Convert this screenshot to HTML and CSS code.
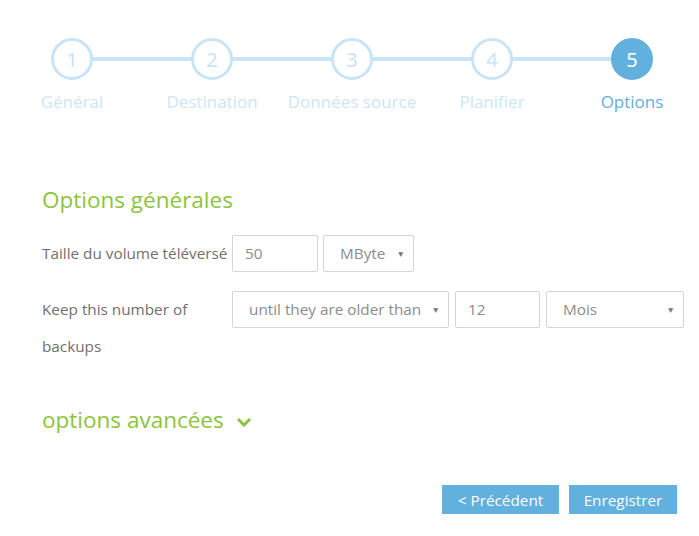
FILE: index.html
```html
<!DOCTYPE html>
<html lang="fr">
<head>
<meta charset="utf-8">
<title>Options</title>
<link rel="stylesheet" href="styles.css">
</head>
<body>
<div class="page">
  <div class="steps">
    <div class="circles">
      <div class="circle">1</div>
      <div class="connector"></div>
      <div class="circle">2</div>
      <div class="connector"></div>
      <div class="circle">3</div>
      <div class="connector"></div>
      <div class="circle">4</div>
      <div class="connector"></div>
      <div class="circle active">5</div>
    </div>
    <div class="labels">
      <div class="label">Général</div>
      <div class="label">Destination</div>
      <div class="label">Données source</div>
      <div class="label">Planifier</div>
      <div class="label active">Options</div>
    </div>
  </div>

  <div class="content">
    <h2 class="section-title">Options générales</h2>

    <div class="form-row">
      <div class="form-label single">Taille du volume téléversé</div>
      <div class="controls tight">
        <div class="input w-num">50</div>
        <div class="select w-unit"><span>MByte</span><span class="arrow">▼</span></div>
      </div>
    </div>

    <div class="form-row">
      <div class="form-label">Keep this number of backups</div>
      <div class="controls">
        <div class="select w-mode"><span>until they are older than</span><span class="arrow">▼</span></div>
        <div class="input w-num-sm">12</div>
        <div class="select w-period"><span>Mois</span><span class="arrow">▼</span></div>
      </div>
    </div>

    <h2 class="section-title advanced">options avancées
      <svg class="chevron" width="16" height="10" viewBox="0 0 16 10"><path d="M2 2 L8 8 L14 2" fill="none" stroke="#8cc43c" stroke-width="3"/></svg>
    </h2>

    <div class="buttons">
      <button class="btn btn-prev">&lt; Précédent</button>
      <button class="btn btn-save">Enregistrer</button>
    </div>
  </div>
</div>
</body>
</html>
```

FILE: styles.css
```css
* { box-sizing: border-box; }
html, body { margin: 0; padding: 0; background: #fff; }
body {
  font-family: "Open Sans", "Noto Sans", sans-serif;
  color: #6f6f6f;
  width: 699px;
  overflow: hidden;
}
.page { padding-top: 38px; }

.steps { padding-left: 51px; }
.circles { display: flex; align-items: center; }
.circle {
  width: 42px; height: 42px;
  border-radius: 50%;
  border: 3px solid #c8e4f6;
  color: #c8e4f6;
  display: flex; align-items: center; justify-content: center;
  font-size: 20px;
  font-family: "Noto Sans", sans-serif;
  flex: none;
}
.circle.active {
  background: #62b0dd;
  border-color: #62b0dd;
  color: #fff;
}
.connector {
  width: 98px; height: 4px;
  background: #c8e4f6;
  flex: none;
}
.labels {
  display: flex;
  margin-left: -49px;
  margin-top: 11px;
}
.label {
  width: 140px;
  flex: none;
  text-align: center;
  font-size: 17px;
  line-height: 22px;
  color: #cde6f6;
  white-space: nowrap;
}
.label.active { color: #62aedb; }

.content { padding: 0 15px 0 42px; }
.section-title {
  margin: 0;
  font-weight: normal;
  font-size: 22.5px;
  line-height: 30px;
  color: #8cc43c;
}
.content > .section-title:first-child { margin-top: 72px; margin-bottom: 20px; }

.form-row {
  display: flex;
  align-items: flex-start;
  margin-bottom: 19px;
}
.form-label {
  width: 190px;
  flex: none;
  font-size: 15.3px;
  line-height: 37px;
  color: #707070;
  padding-right: 4px;
}
.controls { display: flex; gap: 6px; }
.controls.tight { gap: 5px; }
.input, .select {
  height: 37px;
  border: 1px solid #d6d6d6;
  border-radius: 2px;
  font-size: 15.3px;
  line-height: 35px;
  color: #8c8c8c;
  white-space: nowrap;
}
.input { padding-left: 12px; }
.select {
  display: flex;
  justify-content: space-between;
  padding: 0 8px 0 16px;
}
.arrow { font-size: 8.5px; color: #777; }
.w-num { width: 86px; }
.w-num-sm { width: 85px; }
.w-unit { width: 91px; }
.w-mode { width: 217px; }
.w-period { width: 138px; }

.section-title.advanced {
  margin-top: 40px;
  display: flex;
  align-items: center;
  gap: 12px;
}
.chevron { margin-top: 3px; }

.buttons {
  display: flex;
  justify-content: flex-end;
  gap: 10px;
  margin-top: 50px;
  padding-right: 7px;
}
.btn {
  height: 29px;
  border: none;
  border-radius: 0;
  background: #62b0dd;
  color: #fff;
  font-family: "Open Sans", "Noto Sans", sans-serif;
  font-size: 15.3px;
  padding: 0 10px;
  cursor: pointer;
}
.btn-prev { width: 117px; }
.btn-save { width: 108px; }
```
